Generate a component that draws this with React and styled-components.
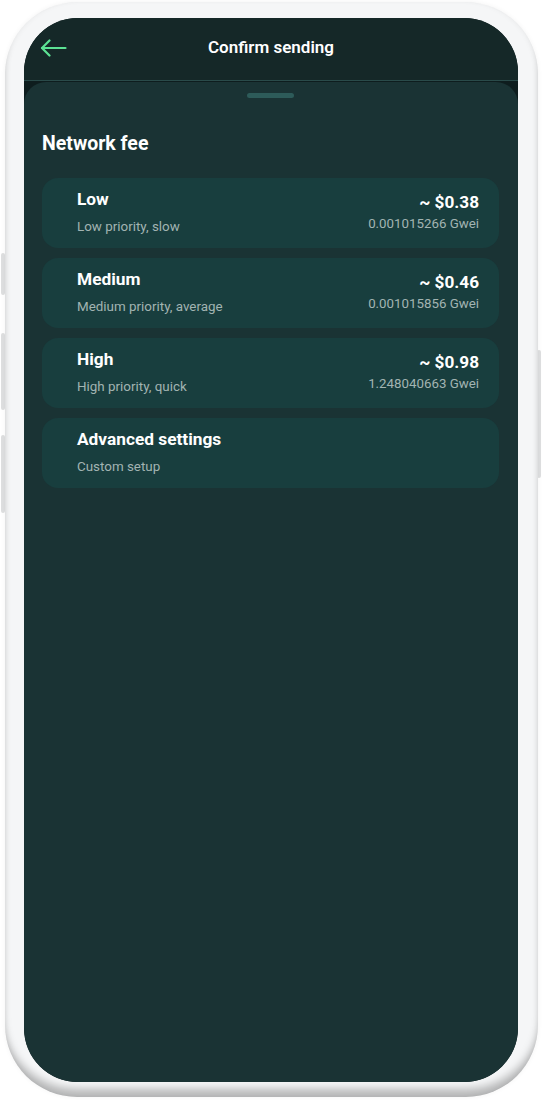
import styled, { createGlobalStyle } from 'styled-components';

const GlobalStyle = createGlobalStyle`
  body {
    margin: 0;
    background: #ffffff;
    font-family: Roboto, "Liberation Sans", Arial, sans-serif;
  }
`;

const Page = styled.div`
  padding: 2px 5px 3px 5px;
`;

const Phone = styled.div`
  position: relative;
  width: 533px;
  height: 1095px;
  box-sizing: border-box;
  padding: 16px 20px 15px 19px;
  border-radius: 72px;
  background: #f5f6f7;
  box-shadow: inset 0 -11px 9px -3px rgba(0, 0, 0, 0.26), inset 3px 0 6px -3px rgba(0, 0, 0, 0.08),
    inset -3px 0 6px -3px rgba(0, 0, 0, 0.08), 0 0 5px rgba(0, 0, 0, 0.05);
  display: flex;
`;

const SideButton = styled.div`
  position: absolute;
  top: ${(p) => p.top}px;
  height: ${(p) => p.h}px;
  ${(p) => (p.right ? 'right: -3px;' : 'left: -4px;')}
  width: 4px;
  border-radius: 2px;
  background: #dedfe0;
  z-index: -1;
`;

const Screen = styled.div`
  flex: 1;
  border-radius: 54px;
  overflow: hidden;
  background: #0e1d1e;
  display: flex;
  flex-direction: column;
`;

const Header = styled.div`
  height: 63px;
  box-sizing: border-box;
  display: grid;
  grid-template-columns: 1fr auto 1fr;
  align-items: center;
  padding-bottom: 5px;
  background: #152828;
  border-bottom: 1px solid #2a4b4a;
`;

const Back = styled.div`
  padding-left: 16px;
  padding-top: 2px;
  display: flex;
  align-items: center;
`;

const Title = styled.div`
  color: #ffffff;
  font-size: 17px;
  font-weight: 600;
`;

const Sheet = styled.div`
  flex: 1;
  margin-top: 1px;
  background: #1a3334;
  border-radius: 22px 22px 0 0;
  padding: 11px 19px 0 18px;
  display: flex;
  flex-direction: column;
`;

const Handle = styled.div`
  align-self: center;
  width: 47px;
  height: 5px;
  border-radius: 3px;
  background: #2d5b59;
  margin-left: -1px;
`;

const SectionTitle = styled.h2`
  margin: 34px 0 22px;
  color: #ffffff;
  font-size: 19.5px;
  line-height: 24px;
  font-weight: 700;
`;

const List = styled.div`
  display: flex;
  flex-direction: column;
  gap: 10px;
`;

const Card = styled.div`
  height: 70px;
  box-sizing: border-box;
  border-radius: 16px;
  background: #183e3e;
  padding: 10px 20px 0 35px;
  display: flex;
  justify-content: space-between;
  align-items: flex-start;
`;

const Left = styled.div`
  display: flex;
  flex-direction: column;
`;

const Right = styled.div`
  display: flex;
  flex-direction: column;
  align-items: flex-end;
  padding-top: 3px;
`;

const Name = styled.div`
  color: #ffffff;
  font-size: 17.3px;
  line-height: 22px;
  font-weight: 700;
`;

const Hint = styled.div`
  margin-top: 8px;
  color: #a2b4b2;
  font-size: 13.4px;
  line-height: 18px;
`;

const Price = styled.div`
  color: #ffffff;
  font-size: 17.2px;
  line-height: 22px;
  font-weight: 700;
`;

const Gwei = styled.div`
  margin-top: 2px;
  color: #a2b4b2;
  font-size: 13.3px;
  line-height: 18px;
`;

const fees = [
  { name: 'Low', hint: 'Low priority, slow', price: '~ $0.38', gwei: '0.001015266 Gwei' },
  { name: 'Medium', hint: 'Medium priority, average', price: '~ $0.46', gwei: '0.001015856 Gwei' },
  { name: 'High', hint: 'High priority, quick', price: '~ $0.98', gwei: '1.248040663 Gwei' },
  { name: 'Advanced settings', hint: 'Custom setup' },
];

const ArrowLeft = () => (
  <svg width="27" height="18" viewBox="0 0 27 18" fill="none">
    <path d="M25.5 9H2" stroke="#5ce394" strokeWidth="2.2" strokeLinecap="round" />
    <path d="M9.5 1.5L2 9l7.5 7.5" stroke="#5ce394" strokeWidth="2.2" strokeLinecap="round" strokeLinejoin="round" />
  </svg>
);

const App = () => {
  return (
    <Page>
      <GlobalStyle />
      <Phone>
        <SideButton top={251} h={42} />
        <SideButton top={331} h={77} />
        <SideButton top={433} h={78} />
        <SideButton right top={348} h={128} />
        <Screen>
          <Header>
            <Back>
              <ArrowLeft />
            </Back>
            <Title>Confirm sending</Title>
            <div />
          </Header>
          <Sheet>
            <Handle />
            <SectionTitle>Network fee</SectionTitle>
            <List>
              {fees.map((f) => (
                <Card key={f.name}>
                  <Left>
                    <Name>{f.name}</Name>
                    <Hint>{f.hint}</Hint>
                  </Left>
                  {f.price && (
                    <Right>
                      <Price>{f.price}</Price>
                      <Gwei>{f.gwei}</Gwei>
                    </Right>
                  )}
                </Card>
              ))}
            </List>
          </Sheet>
        </Screen>
      </Phone>
    </Page>
  );
};

export default App;
